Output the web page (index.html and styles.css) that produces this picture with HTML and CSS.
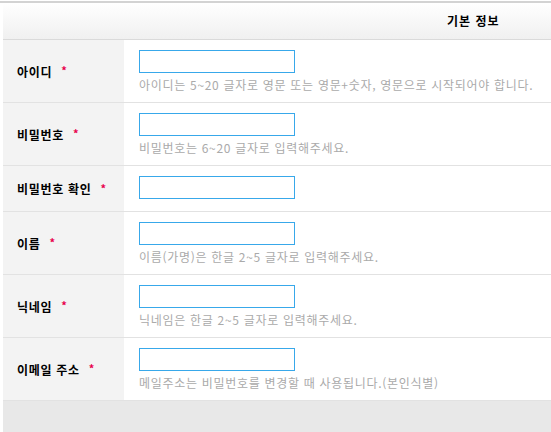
FILE: index.html
```html
<!DOCTYPE html>
<html lang="ko">
<head>
    <meta charset="utf-8"/>
    <title>회원가입 - 기본 정보</title>
    <link rel="stylesheet" href="styles.css">
</head>
<body>
<div class="topline"></div>
<div class="join_form">
    <div class="form_head">기본 정보</div>

    <div class="form_row">
        <div class="form_label">아이디 <span class="req">*</span></div>
        <div class="form_field">
            <input type="text" class="txt"/>
            <p class="hint">아이디는 5~20 글자로 영문 또는 영문+숫자, 영문으로 시작되어야 합니다.</p>
        </div>
    </div>
    <div class="form_row">
        <div class="form_label">비밀번호 <span class="req">*</span></div>
        <div class="form_field">
            <input type="password" class="txt"/>
            <p class="hint">비밀번호는 6~20 글자로 입력해주세요.</p>
        </div>
    </div>
    <div class="form_row">
        <div class="form_label">비밀번호 확인 <span class="req">*</span></div>
        <div class="form_field">
            <input type="password" class="txt"/>
        </div>
    </div>
    <div class="form_row">
        <div class="form_label">이름 <span class="req">*</span></div>
        <div class="form_field">
            <input type="text" class="txt"/>
            <p class="hint">이름(가명)은 한글 2~5 글자로 입력해주세요.</p>
        </div>
    </div>
    <div class="form_row">
        <div class="form_label">닉네임 <span class="req">*</span></div>
        <div class="form_field">
            <input type="text" class="txt"/>
            <p class="hint">닉네임은 한글 2~5 글자로 입력해주세요.</p>
        </div>
    </div>
    <div class="form_row">
        <div class="form_label">이메일 주소 <span class="req">*</span></div>
        <div class="form_field">
            <input type="text" class="txt"/>
            <p class="hint">메일주소는 비밀번호를 변경할 때 사용됩니다.(본인식별)</p>
        </div>
    </div>

    <div class="form_foot"></div>
</div>
</body>
</html>
```

FILE: styles.css
```css
*{ padding:0; margin:0; }
body{ font-family:"Noto Sans CJK KR", "Noto Sans", sans-serif; font-size:12px; color:#000; background:#fff; letter-spacing:0.7px; }
.topline{ height:2px; margin-top:1px; background:#d3d3d3; }
.join_form{ margin-left:3px; }
.form_head{ height:36px; line-height:36px; padding-left:444px; font-weight:bold; border-bottom:1px solid #dadada; background:linear-gradient(#ffffff, #f0f0f0); letter-spacing:1px; }
.form_row{ display:grid; grid-template-columns:121px 1fr; border-bottom:1px solid #e2e2e2; }
.form_label{ display:flex; align-items:center; padding-left:14px; background:#f3f3f3; font-weight:bold; white-space:nowrap; }
.form_label .req{ margin-left:9px; color:#e8004c; font-size:11px; position:relative; top:-1px; }
.form_field{ padding:10px 0 9px 15px; }
.form_field .txt{ display:block; width:156px; height:23px; box-sizing:border-box; border:1px solid #38a8ea; margin-bottom:3px; outline:none; }
.form_field .hint{ margin-top:1px; line-height:17px; color:#aaa; white-space:nowrap; }
.form_foot{ height:40px; background:#e8e8e8; }
```
